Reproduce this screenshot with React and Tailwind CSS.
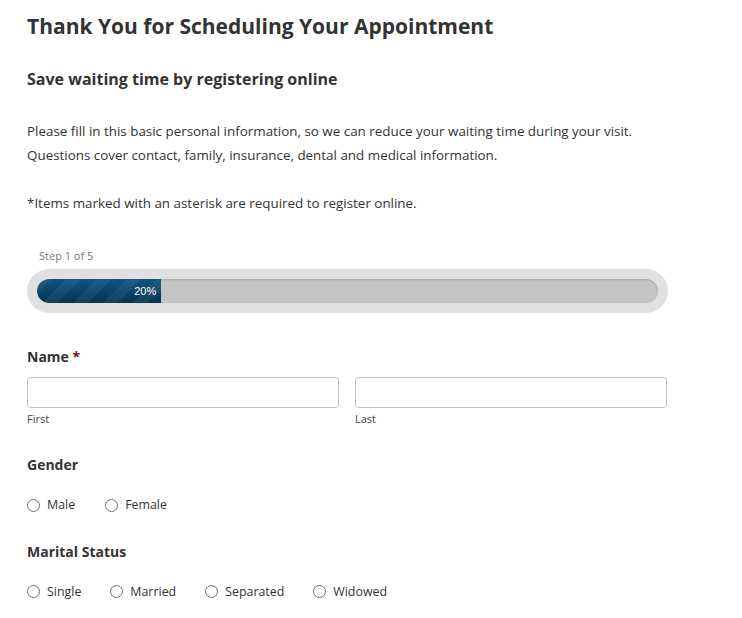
import { useState } from 'react';

function Radio({ label, name, checked, onChange }) {
  return (
    <label className="flex items-center gap-[7px] cursor-pointer">
      <span className="w-[13px] h-[13px] rounded-full border border-[#707070] bg-white flex items-center justify-center">
        {checked && <span className="w-[7px] h-[7px] rounded-full bg-[#333]" />}
      </span>
      <input type="radio" name={name} className="hidden" checked={checked} onChange={onChange} />
      <span className="text-[12.4px] text-[#333]">{label}</span>
    </label>
  );
}

export default function App() {
  const [gender, setGender] = useState('');
  const [marital, setMarital] = useState('');

  return (
    <div className="min-h-screen bg-white text-[#333] px-[27px] pt-[10px]" style={{ fontFamily: '"Open Sans", sans-serif' }}>
      <h1 className="text-[21px] font-bold leading-[32px] text-[#333]">Thank You for Scheduling Your Appointment</h1>

      <h2 className="text-[16px] font-bold mt-[25px] leading-[24px]">Save waiting time by registering online</h2>

      <p className="text-[13.4px] leading-[24px] mt-[28px]">
        Please fill in this basic personal information, so we can reduce your waiting time during your visit.<br />
        Questions cover contact, family, insurance, dental and medical information.
      </p>
      <p className="text-[13.4px] leading-[24px] mt-[24px]">*Items marked with an asterisk are required to register online.</p>

      {/* Progress */}
      <div className="mt-[33px] w-[641px]">
        <div className="text-[11px] text-[#777] pl-[12px] leading-[16px]">Step 1 of 5</div>
        <div className="mt-[5px] h-[44px] rounded-full bg-[#e0e0e0] p-[10px]">
          <div className="h-[24px] rounded-full bg-[#c4c4c4] shadow-[inset_0_1px_2px_rgba(0,0,0,0.15)] overflow-hidden">
            <div
              className="h-full w-[20%] rounded-l-full flex items-center justify-end pr-[5px] bg-[#0b4468]"
              style={{ backgroundImage: 'linear-gradient(135deg, rgba(255,255,255,0.06) 25%, transparent 25%, transparent 50%, rgba(255,255,255,0.06) 50%, rgba(255,255,255,0.06) 75%, transparent 75%), linear-gradient(to bottom, #0e5580, #08324f)', backgroundSize: '30px 30px, 100% 100%' }}
            >
              <span className="text-[11px] text-white font-medium" style={{ fontFamily: '"Liberation Sans", sans-serif' }}>20%</span>
            </div>
          </div>
        </div>
      </div>

      {/* Name */}
      <div className="mt-[32px]">
        <div className="text-[14px] font-bold leading-[24px]">Name <span className="text-[#7a0f0f]">*</span></div>
        <div className="mt-[8px] flex gap-[16px] w-[640px]">
          <div className="flex-1">
            <input type="text" className="w-full h-[31px] border border-[#c4c4c4] rounded-[3px] px-2 text-[13px] outline-none" />
            <div className="text-[11px] text-[#444] mt-[3px] leading-[16px]">First</div>
          </div>
          <div className="flex-1">
            <input type="text" className="w-full h-[31px] border border-[#c4c4c4] rounded-[3px] px-2 text-[13px] outline-none" />
            <div className="text-[11px] text-[#444] mt-[3px] leading-[16px]">Last</div>
          </div>
        </div>
      </div>

      {/* Gender */}
      <div className="mt-[26px]">
        <div className="text-[14px] font-bold leading-[24px]">Gender</div>
        <div className="mt-[19px] flex gap-[30px]">
          {['Male', 'Female'].map((g) => (
            <Radio key={g} label={g} name="gender" checked={gender === g} onChange={() => setGender(g)} />
          ))}
        </div>
      </div>

      {/* Marital status */}
      <div className="mt-[25px]">
        <div className="text-[14px] font-bold leading-[24px]">Marital Status</div>
        <div className="mt-[19px] flex gap-[29px]">
          {['Single', 'Married', 'Separated', 'Widowed'].map((m) => (
            <Radio key={m} label={m} name="marital" checked={marital === m} onChange={() => setMarital(m)} />
          ))}
        </div>
      </div>
    </div>
  );
}
